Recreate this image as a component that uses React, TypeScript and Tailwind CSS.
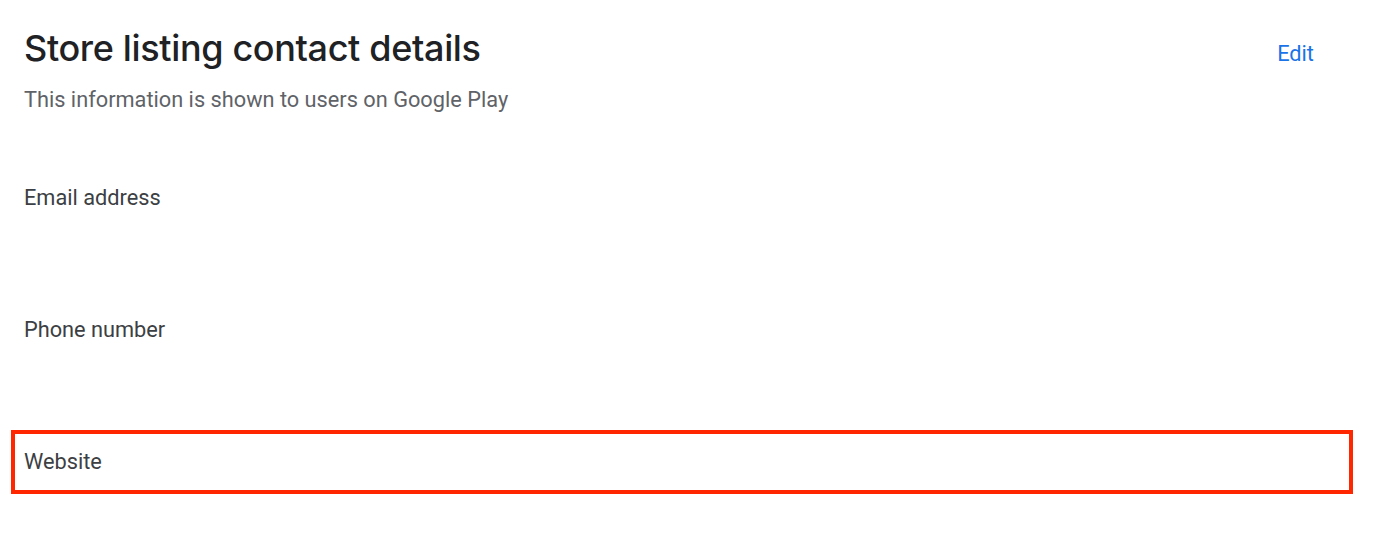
import React from 'react';

const fields = ['Email address', 'Phone number', 'Website'];

const App: React.FC = () => {
    return (
        <div className="w-[1384px] h-[536px] bg-white font-['Roboto',sans-serif]">
            <div className="flex justify-between items-start pl-6 pr-[70px] pt-[26px]">
                <div>
                    <h1 className="text-[36px] leading-[44px] font-medium text-[#202124] font-['Inter',sans-serif] tracking-[-0.35px]">
                        Store listing contact details
                    </h1>
                    <p className="mt-[16px] text-[21.75px] leading-[28px] text-[#5f6368]">
                        This information is shown to users on Google Play
                    </p>
                </div>
                <button className="mt-[14px] text-[21.75px] leading-[28px] text-[#1a73e8]">Edit</button>
            </div>

            {/* Contact fields */}
            <div className="mt-[52px] flex flex-col gap-[68px] pl-[11px] pr-[31px]">
                {fields.map((label, i) => (
                    <div
                        key={label}
                        className={`h-16 flex items-center text-[21.75px] text-[#3c4043] ${i === 2 ? 'border-4 border-[#ff2600] pl-[9px]' : 'pl-[13px]'}`}
                    >
                        {label}
                    </div>
                ))}
            </div>
        </div>
    );
};

export default App;
